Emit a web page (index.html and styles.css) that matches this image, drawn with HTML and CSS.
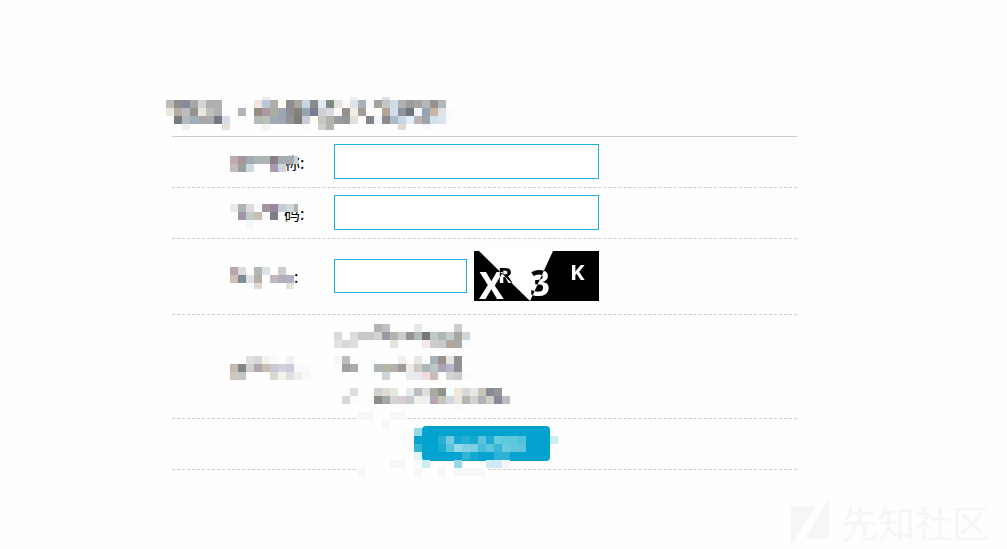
FILE: index.html
```html
<!DOCTYPE html>
<html lang="zh-CN">
<head>
<meta charset="utf-8">
<title>先知社区</title>
<link rel="stylesheet" href="styles.css">
</head>
<body>
<main class="panel">
  <h1 class="title">
    <svg class="mosaic" width="288" height="33" viewBox="0 5 288 33" data-rows="
      . . . . . . . . . . . . eee . . . . . . . . . . eceff3 . . . d8e2e8 |
      bfbcb5 918e8e 858b9d a5a7a9 d5d4d2 b0b0b0 b0b0b0 fcfcfc . . . f0e6df b8c8d8 b0aea8 fefef6 8f8b8d a9a69b c5d6e2 8d8b8a dde9f2 7f8a83 e8e3e1 fafafc e0e2e6 a6b1bd f8f8fa a5a29b c5c5c5 cfdcea b0b0ac 9c9d98 a8a4a3 b5b7bc 98928e b2b9be . |
      e9e7e2 b6aea1 b9bdc0 959290 e8e7e2 bcc0b7 b2b2b4 fcfcfc . b6b4b7 . 968b7e a89a9e acaca4 9ca9b5 8e8f92 84827f 95a4aa 7b7b92 cfd0d0 d8dbdf . 98918b f2ede6 a39c98 . . b3a698 d2deeb 8f959d 6f747a eff5fa 95a3b3 c7b5a2 dfe1e2 f8fbff |
      . 7b7c80 b4b9bc a0afb9 a8a8a6 a9aaad 747880 d8dce8 . . . b4bab7 b9c0b5 9fa9b5 a0a7b2 929498 807d78 c9ccd6 fdfdf6 c7c7c2 b4b3aa 9a9b9e 969799 e5e0d9 . 80868a eff5fa 8d888b acbac8 c8d7e3 dfeefa bab4b3 9fa4a9 d0e1ef dce5ef fafcff |
      . . eee . . . . e6dfdb . . . . f5f2f0 . . . . fafafa . cfcfcd b5b3aa . . . . . . . . ded9d5 . . f6f7fc"></svg>
  </h1>
  <form class="form">
    <div class="row">
      <label class="label" for="name"><span class="label-text">称:</span>
        <svg class="mosaic cover" width="68" height="16" viewBox="0 0 68 16" data-rows="
        bdaeac a8959c 9fabb3 acb4b6 acb4b4 8b7f86 a5adb0 a5adb0 c8d0d4 |
        c5bab8 98a39f cfd7df . . aa99b0 cbd4dc"></svg></label>
      <input class="field" id="name" type="text">
    </div>
    <div class="row">
      <label class="label" for="password"><span class="label-text">码:</span>
        <svg class="mosaic cover cover-high" width="68" height="24" viewBox="0 0 68 24" data-rows="
        efe8e8 aeb3b3 dcdcde f8fbff a3969a 9489a0 c3ccd5 d0d9da b0b2b5 |
        . a395a6 c3cbcc c8bdb3 fafafa 807d8a |
        . . f4f9fd"></svg></label>
      <input class="field" id="password" type="password">
    </div>
    <div class="row row-captcha">
      <label class="label" for="code"><span class="label-text label-short">:</span>
        <svg class="mosaic cover cover-high" width="64" height="22" viewBox="0 0 64 22" data-rows="
        b8a5ad dcdcde . b4b6b6 dde2e6 . cfcdca . |
        cfc0b5 7f8d97 dbe0e6 baafa5 . c2b7be b0adbe b3b0c3 |
        . . f6fbff ddd8d5 . . . e5e1dd"></svg></label>
      <input class="field field-short" id="code" type="text">
      <svg class="captcha" width="125" height="50" viewBox="0 0 125 50">
        <rect width="125" height="50" fill="#000"/>
        <path d="M5 0H79L56 50Z" fill="#fff"/>
        <text x="5" y="48" font-size="37">X</text>
        <text x="24" y="32" font-size="22">R</text>
        <text x="56" y="45" font-size="35">3</text>
        <text x="96" y="29" font-size="22">K</text>
      </svg>
    </div>
    <div class="row row-options">
      <div class="label">
        <svg class="mosaic" width="88" height="24" viewBox="0 0 88 24" data-rows="
        . . e2dedc d5d8da f6f2ee f8fafa . f4f1f5 fdfdfd |
        c4bab0 838780 d0cfce b2a6ae c3c0b3 c7c9d4 d5cfdb cecbdb f9f9fc fafafa |
        d0c8c0 c3c8c5 . . . dcd9cf f2f3f0 dedede eeeeee f8f8f8 fcfcfc"></svg></div>
      <div class="options">
        <svg class="mosaic" width="176" height="24" viewBox="0 0 176 24" data-rows="
        . . . . . b2b2b8 c0c0c8 . . . e8e8e8 . . . . cccccc |
        dadada . dddddd c8c8c8 c8c8c8 d4d4d0 949aa6 b3b5ac cccccc 92948f adbdb5 7b757e bccaca aeb7b6 c3cdce aaa69f cfd5dc |
        e2e2e2 d8d8d8 dedede . . . . e3e5dc . . . f5e7ec cfcccd c8c8c8 b3a79d a9a9a8 f6fbff"></svg>
        <svg class="mosaic" width="176" height="24" viewBox="0 0 176 24" data-rows="
        f8f8f8 bdbdbd . . . . . . f0efe9 . e7e7e7 . a6b1bb 98918d e4e4e4 929292 |
        fbfbfb a0a0a0 acacac . . adb7b4 b5b9a4 b5afb2 9b9b9a f0e8e6 cfcac8 a9b9b6 bfc5c4 a8a4b3 b6b6c8 929292 |
        . fcfeff . . . . ced5da . . e5edef e9e8ec f0dcdd c9beb7 . d5d5d0 cbcbd0 f7fbff"></svg>
        <svg class="mosaic" width="176" height="24" viewBox="0 0 176 24" data-rows="
        fdfdfd f9fbfa dedede . . d2d3d0 dfdbd3 e6e6e2 . e5edef bdbdbf dcdcdf a8aaa2 8f928a f3ffff f2e6d8 d6d9d7 e6e6e6 cdc4b8 8a8a97 959697 |
        . d5dad8 fbfbfb . . 8a8c83 a3a6a7 d6d5d1 d8cdd6 c8ccd1 f0f0e9 e9f0f2 b6a4b0 c4c7b7 d2d6e1 e6e6e3 b9b5ad d2d2d0 b0b3b5 d0cdc3 858b97 bcbcbf |
        . . . . . . . . . . . . . . . f7fbff"></svg>
      </div>
    </div>
    <div class="row row-submit">
      <button class="submit" type="button"></button>
      <svg class="mosaic scatter" width="208" height="64" viewBox="0 0 208 64" data-rows="
      . f8f8f8 f8f8f8 fefefe fefefe f8f8f8 f8f8f8 |
      . . . . f8f8f8 |
      . . . . . . . . 96d7e9 |
      . . . . . . . . 02a3ce . . 26b0d4 74cbe0 12aad0 22afd3 12a8d0 5bc2dc 1aacd2 66cbdb 5ac8de 5ac8de 4ec2d8 . . . cdebf5 |
      . . . . . . . . 35b3d6 . . 1aacd2 58c3d9 94d8e9 7fd1e4 7ccee2 46bddb 5cc6de 3cb6d8 6ccadf 60c7de 5fc5dc |
      . . . . . . . . e4f4f9 . . . . . 34b3d7 14a9d1 . . 2db1d6 2db1d6 |
      . . . . . f8f8f8 f8f8f8 . f6fbff cdebf5 . . . 96d7e9 . . . cdebf5 cdebf5 f5f5f5 |
      . f8f8f8 fefefe fefefe fefefe fefefe fefefe fefefe f8f8f8 fefefe fefefe f8f8f8 fefefe f8f8f8 f8f8f8 f8f8f8 f8f8f8"></svg>
    </div>
  </form>
</main>
<footer class="brand">
  <svg width="38" height="47" viewBox="0 0 38 47" fill="#f6f6f6">
    <path d="M0 7H25L0 47Z"/>
    <path d="M38 0V39H14Z"/>
  </svg>
  <span>先知社区</span>
</footer>
<script src="mosaic.js"></script>
</body>
</html>
```
FILE: styles.css
```css
* { box-sizing: border-box; }

body {
  margin: 0;
  background: #fefefe;
  color: #000;
  font-family: "Noto Sans CJK SC", sans-serif;
  font-size: 16px;
  line-height: 20px;
}

svg { display: block; flex: none; }

.panel { padding: 97px 210px 0 172px; }

.title {
  margin: 0;
  padding-bottom: 6px;
  border-bottom: 1px solid #ccc;
}

.title .mosaic { margin-left: -6px; }

.row {
  position: relative;
  display: flex;
  align-items: center;
  padding: 7px 0 8px;
  border-bottom: 1px dashed #ccc;
}

.row-captcha { padding: 12px 0 13px; }

.label {
  position: relative;
  flex: none;
  width: 162px;
  padding-left: 58px;
}

.label-text { padding-left: 54px; }
.label-short { padding-left: 64px; }

.cover {
  position: absolute;
  left: 58px;
  top: 4px;
}

.cover-high { top: 1px; }

.field {
  width: 265px;
  height: 35px;
  padding: 0 8px;
  border: 1px solid #1eb0de;
  border-radius: 0;
  background: #fff;
  font: inherit;
  outline: none;
}

.field-short {
  width: 133px;
  height: 34px;
  margin-right: 7px;
}

.captcha { isolation: isolate; }

.captcha text {
  fill: #fff;
  font-family: "Noto Sans", sans-serif;
  font-weight: 700;
  mix-blend-mode: difference;
}

.row-options { padding: 9px 0 6px; }

.options {
  display: grid;
  gap: 8px;
}

.row-submit { padding-left: 250px; }

.submit {
  width: 128px;
  height: 35px;
  border: 0;
  border-radius: 4px;
  background: #02a3ce;
  cursor: pointer;
}

.scatter {
  position: absolute;
  left: 178px;
  top: -7px;
  pointer-events: none;
}

.brand {
  display: flex;
  justify-content: flex-end;
  align-items: center;
  gap: 12px;
  padding: 29px 18px 0 0;
  color: #f6f6f6;
  font-size: 37px;
  line-height: 47px;
}
```
FILE: mosaic.js
```js
// Fills each mosaic with 8px cells; "." leaves a cell empty, "|" ends a row.
const CELL = 8;
document.querySelectorAll(".mosaic").forEach((svg) => {
  svg.setAttribute("aria-hidden", "true");
  svg.dataset.rows.split("|").forEach((row, y) => {
    row.trim().split(/\s+/).forEach((color, x) => {
      if (color === ".") return;
      const rect = document.createElementNS("http://www.w3.org/2000/svg", "rect");
      rect.setAttribute("x", x * CELL);
      rect.setAttribute("y", y * CELL);
      rect.setAttribute("width", CELL);
      rect.setAttribute("height", CELL);
      rect.setAttribute("fill", "#" + color);
      svg.append(rect);
    });
  });
});
```
